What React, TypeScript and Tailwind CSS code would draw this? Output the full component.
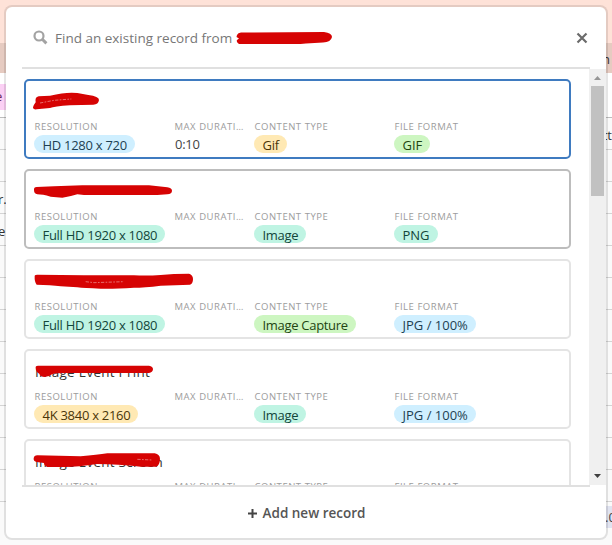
type Choice = { label: string; color: string };

type RecordItem = {
  title: string;
  border: string;
  scribble: string;
  scratch?: string;
  resolution: Choice;
  duration?: string;
  contentType: Choice;
  fileFormat: Choice;
};

const BLUE = 'bg-[#cfefff] text-[#1d3f52]';
const TEAL = 'bg-[#bff4e3] text-[#12463a]';
const GREEN = 'bg-[#cdf6c1] text-[#1f4512]';
const YELLOW = 'bg-[#ffe9b4] text-[#4a3508]';

const records: RecordItem[] = [
  {
    title: '',
    border: 'border-[#3f7bc0]',
    scribble: 'M-3 79 Q0 70 5 64 Q2 48 14 46 L48 44 Q98 32 130 36 L163 42 Q195 46 195 57 Q193 71 178 71 L108 73 Q60 76 48 81 L8 85 Q-3 86 -3 79Z',
    scratch: 'M18 66 L60 58 L112 54',
    resolution: { label: 'HD 1280 x 720', color: BLUE },
    duration: '0:10',
    contentType: { label: 'Gif', color: YELLOW },
    fileFormat: { label: 'GIF', color: GREEN },
  },
  {
    title: '',
    border: 'border-[#bdbdbd]',
    scribble: 'M0 57 Q-1 48 8 48 L60 46 L145 43 L345 43 L400 49 Q414 52 414 59 Q414 69 400 70 L370 72 L150 72 L130 70 Q105 78 85 80 L50 77 Q25 70 10 70 Q0 68 0 57Z',
    resolution: { label: 'Full HD 1920 x 1080', color: TEAL },
    contentType: { label: 'Image', color: TEAL },
    fileFormat: { label: 'PNG', color: TEAL },
  },
  {
    title: '',
    border: 'border-[#e4e4e4]',
    scribble: 'M2 44 Q3 41 10 41 L150 43 L300 43 Q340 45 380 42 L420 39 L465 38 Q477 42 477 54 Q477 68 468 71 L380 74 Q330 80 300 80 Q240 84 200 83 Q150 82 130 79 L80 76 Q50 72 8 71 Q1 62 2 44Z',
    scratch: 'M155 62 L180 65 L270 62',
    resolution: { label: 'Full HD 1920 x 1080', color: TEAL },
    contentType: { label: 'Image Capture', color: GREEN },
    fileFormat: { label: 'JPG / 100%', color: BLUE },
  },
  {
    title: 'Image Event Print',
    border: 'border-[#e4e4e4]',
    scribble: 'M5 50 Q4 44 12 44 L345 44 Q357 46 357 55 Q356 65 345 66 L100 66 Q60 66 54 70 Q45 78 32 78 Q18 76 16 68 Q5 62 5 50Z',
    resolution: { label: '4K 3840 x 2160', color: YELLOW },
    contentType: { label: 'Image', color: TEAL },
    fileFormat: { label: 'JPG / 100%', color: BLUE },
  },
  {
    title: 'Image Event Screen',
    border: 'border-[#e4e4e4]',
    scribble: 'M-1 52 Q0 43 10 43 L140 46 Q190 42 220 37 L362 37 Q378 40 378 54 Q377 75 366 77 L320 77 Q250 69 190 69 Q130 78 95 78 L40 78 Q30 74 30 66 L8 63 Q-2 62 -1 52Z',
    scratch: 'M310 55 L355 57',
    resolution: { label: 'Full HD 1920 x 1080', color: TEAL },
    contentType: { label: 'Image', color: TEAL },
    fileFormat: { label: 'PNG', color: TEAL },
  },
];

function Pill({ choice, spacing = 'tracking-normal' }: { choice: Choice; spacing?: string }) {
  return (
    <span className={`inline-flex h-[18px] items-center rounded-full pt-[3px] pr-2 pl-[8.5px] text-[13px] leading-none whitespace-nowrap ${spacing} ${choice.color}`}>
      {choice.label}
    </span>
  );
}

function Field({ name, width, children }: { name: string; width: string; children?: React.ReactNode }) {
  return (
    <div className={`shrink-0 ${width}`}>
      <div className="h-[17px] pl-[0.5px] text-[9.5px] leading-[18px] tracking-[0.53px] whitespace-nowrap text-[#9c9c9c] uppercase">{name}</div>
      <div className="flex h-[18px]">{children}</div>
    </div>
  );
}

function RecordCard({ record }: { record: RecordItem }) {
  return (
    <div className={`h-20 shrink-0 rounded-[5px] border-2 bg-white px-2 ${record.border}`}>
      <div className="relative h-[37px] pt-[11px] pl-[1px] text-[13.5px] leading-[20px] font-medium tracking-[0.25px] text-[#333]">
        {record.title}
        <svg className="absolute top-0 left-0 overflow-visible" width="204" height="37" viewBox="0 0 612 111">
          <path d={record.scribble} fill="#d60303" />
          {record.scratch && (
            <path d={record.scratch} fill="none" stroke="#f0a0a0" strokeWidth="2" strokeDasharray="10 4 5 4" />
          )}
        </svg>
      </div>
      <div className="flex">
        <Field name="Resolution" width="w-[140px]">
          <Pill choice={record.resolution} spacing="tracking-[-0.28px]" />
        </Field>
        <Field name="Max durati…" width="w-[80px]">
          <span className="pt-[3px] pl-[1px] text-[13px] leading-none tracking-[-0.3px] text-[#444]">{record.duration}</span>
        </Field>
        <Field name="Content type" width="w-[140px]">
          <Pill choice={record.contentType} spacing="tracking-[-0.3px]" />
        </Field>
        <Field name="File format" width="w-[140px]">
          <Pill choice={record.fileFormat} />
        </Field>
      </div>
    </div>
  );
}

function Scrollbar() {
  return (
    <div className="flex w-[17px] shrink-0 flex-col items-center bg-[#f0f0f0]">
      <svg width="17" height="17" viewBox="0 0 17 17">
        <path d="M5 11 L8.5 7 L12 11Z" fill="#969696" />
      </svg>
      <div className="h-[110px] w-[13px] bg-[#c1c1c1]" />
      <svg className="mt-auto" width="17" height="17" viewBox="0 0 17 17">
        <path d="M5 6 L12 6 L8.5 10Z" fill="#404040" />
      </svg>
    </div>
  );
}

const rows = [
  { left: '', right: 'ct' },
  { left: '', right: '' },
  { left: 'r.', right: '' },
  { left: 'e', right: '' },
  ...Array.from({ length: 8 }, () => ({ left: '', right: '' })),
];

function Backdrop() {
  return (
    <div className="flex h-full flex-col bg-[#fafafa] text-[13px] text-[#333]">
      <div className="h-[43px] shrink-0 bg-[#fee2d8]" />
      <div className="flex h-[30px] shrink-0 items-center justify-end bg-[#e6cbc1] pt-1">
        <span className="mr-[2px]">n</span>
      </div>
      <div className="flex h-[44px] shrink-0 items-center bg-white">
        <div className="mt-1 h-[26px] w-5 bg-[#fbd0f4] pt-[3px] text-[#6b2a61]">
          <span className="-ml-[5px]">e</span>
        </div>
      </div>
      <div className="h-px shrink-0 bg-[#bdbdbd]" />
      {rows.map((row, i) => (
        <div key={i} className="flex h-8 shrink-0 items-center justify-between border-b border-[#d4d4d4] pt-1">
          <span className="-ml-[2px]">{row.left}</span>
          <span>{row.right}</span>
        </div>
      ))}
    </div>
  );
}

export default function App() {
  return (
    <div className="relative h-[545px] w-[612px] overflow-hidden font-['Open_Sans','Noto_Sans',sans-serif]">
      <Backdrop />
      <div className="absolute top-[506px] right-0 h-[22px] w-3 bg-[#e0e3f0] pt-[2px] text-[13px] text-[#444]">
        <span className="ml-[5px]">.0</span>
      </div>
      <div className="absolute top-[5px] left-1 flex h-[535px] w-[604px] flex-col rounded-lg border-2 border-black/10 bg-white bg-clip-padding">
        <div className="flex h-[60px] shrink-0 items-center pr-[18px] pl-[27px]">
          <svg className="shrink-0" width="15" height="15" viewBox="0 0 15 15" fill="none" stroke="#a3a3a3">
            <circle cx="6" cy="6" r="4.5" strokeWidth="2.2" />
            <path d="M9.3 9.3 L13.4 13.4" strokeWidth="3" />
          </svg>
          <span className="mt-[2px] ml-[7px] text-[13.5px] whitespace-nowrap text-[#777]">Find an existing record from</span>
          <svg className="mt-[2px] ml-1" width="97" height="14" viewBox="0 0 97 14">
            <path d="M1 4 Q2 1.5 5 1.5 L88 1 Q96 2 96 6 Q95 11 87 11.5 L70 12.5 Q64 13 60 13 L3 13 Q0 11 1 9 L3 7.5 L0.5 6Z" fill="#d60303" />
          </svg>
          <svg className="mt-px ml-auto" width="12" height="12" viewBox="0 0 12 12">
            <path d="M1.5 1.5 L10.5 10.5 M10.5 1.5 L1.5 10.5" stroke="#6b6b6b" strokeWidth="2.2" fill="none" />
          </svg>
        </div>
        <div className="ml-4 h-[2px] w-[568px] shrink-0 bg-[#e0e0e0]" />
        <div className="flex h-[416px] shrink-0">
          <div className="flex min-w-0 flex-1 flex-col gap-[10px] overflow-hidden pt-[10px] pr-[18px] pl-[18px]">
            {records.map((record, i) => (
              <RecordCard key={i} record={record} />
            ))}
          </div>
          <Scrollbar />
        </div>
        <div className="ml-4 h-[2px] w-[568px] shrink-0 bg-[#e0e0e0]" />
        <button className="flex flex-1 items-center justify-center gap-[6px] pt-px pl-px text-[13.5px] font-semibold text-[#555]">
          <svg width="9" height="9" viewBox="0 0 9 9">
            <path d="M4.5 0 V9 M0 4.5 H9" stroke="#444" strokeWidth="2" />
          </svg>
          <span className="pt-px">Add new record</span>
        </button>
      </div>
    </div>
  );
}
